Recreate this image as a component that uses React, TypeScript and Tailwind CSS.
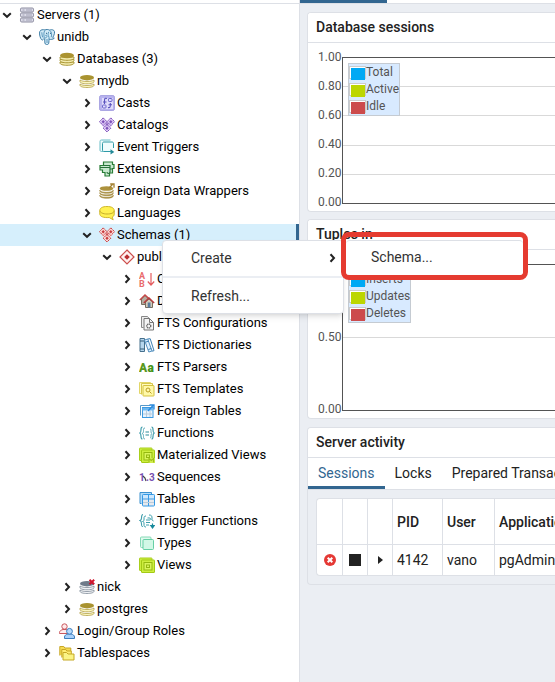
import type { ReactNode } from "react";

function Icon({ children }: { children: ReactNode }) {
  return (
    <svg viewBox="0 0 16 16" className="size-4 shrink-0" fill="none" aria-hidden="true">
      {children}
    </svg>
  );
}

function Disks({ dark, light, children }: { dark: string; light: string; children?: ReactNode }) {
  return (
    <Icon>
      <path d="M1 11v1.3c0 1.3 3 2.2 7 2.2s7-.9 7-2.2V11c-1.500 1-4 1.500-7 1.500S2.500 12 1 11z" fill={light} stroke={dark} strokeWidth=".7" />
      <path d="M1 7v1.600c0 1.300 3 2.200 7 2.200s7-.9 7-2.200V7c-1.500 1-4 1.500-7 1.500S2.500 8 1 7z" fill={light} stroke={dark} strokeWidth=".7" />
      <ellipse cx="8" cy="4.700" rx="7" ry="2.700" fill={dark} />
      {children}
    </Icon>
  );
}

function Diamonds({ color, fill }: { color: string; fill: string }) {
  const spots = [[4.2, 4.7], [11.8, 4.7], [8, 11.2]];
  return (
    <Icon>
      <path d="M4.200 1L8 4.500 11.800 1l3.700 3.700L8 15.200.5 4.700z" fill={fill} />
      {spots.map(([x, y], i) => (
        <g key={i}>
          <path d={`M${x} ${y - 3.8}l3.800 3.800-3.800 3.800-3.800-3.800z`} fill={fill} stroke={color} strokeDasharray="2 .5" />
          <path d={`M${x} ${y - 1.7}l1.700 1.700-1.700 1.700-1.700-1.700z`} fill={color} />
        </g>
      ))}
      <path d="M8 5.500l1.500 1.700L8 9 6.500 7.200z" fill={color} fillOpacity=".7" />
    </Icon>
  );
}

function Views({ children }: { children?: ReactNode }) {
  return (
    <Icon>
      <rect x=".5" y="1" width="12.500" height="12.500" rx=".5" fill="#cdee3e" stroke="#a9cf1c" />
      <rect x="2.500" y="3" width="13" height="12.500" rx=".5" fill="#cdee3e" stroke="#a3c915" />
      <rect x="5" y="5.500" width="8" height="7.500" fill="#d9f55c" stroke="#94b810" />
      <rect x="7.500" y="8" width="3" height="2.500" stroke="#94b810" />
      {children}
    </Icon>
  );
}

const icons = {
  servers: (
    <Icon>
      {[1, 6, 11].map((y) => (
        <g key={y}>
          <rect x="1.500" y={y} width="13" height="4" rx="1.200" fill="#dcdce8" stroke="#8c8ca0" />
          <path d={`M3.500 ${y + 2}h2M7 ${y + 2}h6`} stroke="#a0a0b4" />
        </g>
      ))}
    </Icon>
  ),
  elephant: (
    <Icon>
      <path d="M3 .8C.8 1 .2 3.300.7 6c.4 2.300 1.400 5 2.600 5 .8 0 1.200-1 1.700-1.600l.7.6.2 4c.3 1.700 2.200 2.300 3.400 1.100.8-.8.500-3.200.8-4.900 1.500.5 4 .2 5.200-1-1.200.1-1.700-.5-1.300-1.200 1.400-2.200 2.200-5.400.9-6.500-1.400-1.100-3.200-.9-4.200-.4C9.100.3 7.200.3 6 1 5 .6 4 .6 3 .8z" fill="#d3ebf7" stroke="#3f7ea6" />
      <path d="M5.800 1.500c-1.400 2-.8 4.500-.6 7.500M10.700 1.400c2 1.600 2.300 3.800 1.500 6.800M9.800 2.800c-1.200 1.900-.8 3 .2 5.500v2M6.300 6.500c1-.6 1.700-.3 1.700.7S7 9 5.800 9M2.800 3.300c.2 2 .3 3.400.8 5M8 10v4" stroke="#4c8db5" strokeWidth=".9" />
      <path d="M7 4.300h1M11 4.300h1" stroke="#265d80" />
    </Icon>
  ),
  databases: (
    <Icon>
      {[12, 9.500, 7].map((y) => (
        <path key={y} d={`M1 ${y - 1}v1c0 1.400 3 2.300 7 2.300s7-.9 7-2.300v-1z`} fill="#f3ebae" stroke="#a38e2a" strokeWidth=".9" />
      ))}
      <ellipse cx="8" cy="4.500" rx="7" ry="2.800" fill="#ab9330" />
    </Icon>
  ),
  database: <Disks dark="#a99330" light="#fbf7bf" />,
  databaseOff: (
    <Disks dark="#6f7b8a" light="#f0f2f5">
      <path d="M10.500.8l4.700 4.400M15.200.8l-4.700 4.400" stroke="#d2142b" strokeWidth="2" />
    </Disks>
  ),
  casts: (
    <Icon>
      <rect x=".6" y=".6" width="14.800" height="14.800" rx="1.500" fill="#b9b4ef" stroke="#a5a0e0" />
      <path d="M3 3h11v11H3z" fill="#dfdcfb" />
      <path d="M8 3.500c-2-.6-2.500 0-2.500 2V9M4 7h3.500M9 12.500c2 .6 2.300-.5 2.300-2.500V8M9.500 9.700h3.500" stroke="#5952bd" strokeWidth="1.100" />
      <rect x="9.500" y="3.500" width="3.500" height="3" rx=".7" stroke="#6962ca" />
      <rect x="3.500" y="10" width="3.500" height="3" rx=".7" stroke="#6962ca" />
    </Icon>
  ),
  catalogs: <Diamonds color="#7d50b8" fill="#dfcbf6" />,
  schemas: <Diamonds color="#c83b3e" fill="#fbdcda" />,
  schema: (
    <Icon>
      <path d="M8 1l7 7-7 7-7-7z" fill="#fff0ef" stroke="#cc4e4d" strokeWidth="1.200" />
      <path d="M8 5.200L10.800 8 8 10.800 5.200 8z" fill="#b92e31" />
    </Icon>
  ),
  triggers: (
    <Icon>
      <path d="M11.500 1h-9C1.500 1 1 1.500 1 2.500v8.500c0 1 .5 1.500 1.500 1.500H4" fill="#eefbfc" stroke="#68bdc7" />
      <path d="M14.500 9V4.500c0-1-.5-1.500-1.500-1.500H5c-1 0-1.500.5-1.500 1.500V11c0 1 .5 1.500 1.500 1.500h8.500" fill="#f0fcfd" stroke="#2f9aa7" />
      <path d="M11.500 10.200l3.800 2.700-3.800 2.700z" fill="#238997" />
    </Icon>
  ),
  extensions: (
    <Icon>
      <path d="M4.500 1h9v2.500H15v4h-1.500V12h-3v3H6v-3.500H3.500V9H1V4.500h3.500z" fill="#c8e9cf" stroke="#287d36" strokeWidth="1.200" />
      <path d="M1 6.500h10v4.500c0 2-3 2-3 0M4.500 4.500H11v2M11 8h2.500" stroke="#28723a" strokeWidth="1.200" />
    </Icon>
  ),
  fdw: (
    <Icon>
      {[13, 10.500, 8].map((y) => (
        <path key={y} d={`M.8 ${y - 1}c0 1.400 3 2.300 6.700 2.300s6.700-.9 6.700-2.300v1c0 1.500-3 2.300-6.700 2.300S.8 ${y + 1} .8 ${y}z`} fill="#aa9140" stroke="#987c2c" strokeWidth=".5" />
      ))}
      <ellipse cx="7.500" cy="5.500" rx="6.700" ry="2.300" fill="#ad923d" />
      <path d="M10 5l3.500-3.500M11.200 1H15v3.800" stroke="#a38131" strokeWidth="1.300" />
    </Icon>
  ),
  languages: (
    <Icon>
      <path d="M.8 5.500C.8 3 3.500 1.500 8 1.500S15.200 3 15.200 5.500V9c0 1.700-.7 2.500-2 3l1 2.800-4-2.300C4.500 13 .8 11.500.8 9z" fill="#fff152" stroke="#d0b92e" />
      <path d="M.8 5.500c0 2 3.200 3.500 7.200 3.500s7.200-1 7.200-3.500" stroke="#c6ad2a" />
    </Icon>
  ),
  collations: (
    <Icon>
      <text x="0" y="7.500" fontSize="9" fontWeight="700" fill="#e96b6c">A</text>
      <text x="0" y="15.500" fontSize="9" fontWeight="700" fill="#e96b6c">B</text>
      <path d="M12 2v12M8.800 10.500L12 14l3.200-3.500" stroke="#e45c5e" strokeWidth="1.200" />
    </Icon>
  ),
  domains: (
    <Icon>
      <path d="M2.500 6v5.500h7V6L6 2.500z" fill="#b5ada0" stroke="#776e60" />
      <path d="M.8 7L6 2l5 4.500" stroke="#c64747" strokeWidth="1.300" />
      <path d="M6.500 9v5.500h7V9L10 6z" fill="#d3cbb9" stroke="#776e60" />
      <path d="M4.800 10L10 5l5.200 5" stroke="#b83a3c" strokeWidth="1.400" />
      <path d="M8.700 9.500h2.800v5H8.700z" fill="#577c9e" />
    </Icon>
  ),
  ftsConfig: (
    <Icon>
      <path d="M4.500 12.500h-2v-11h6l2 2.500" fill="#eee" stroke="#888" />
      <path d="M5 3.500h5.500l4 4v7.500H5z" fill="#f4f4f4" stroke="#777" />
      <path d="M10.500 3.500v4h4" stroke="#777" />
      <circle cx="9.800" cy="11" r="2" stroke="#666" strokeWidth="1.300" strokeDasharray="1.200 .5" />
    </Icon>
  ),
  ftsDictionary: (
    <Icon>
      <path d="M1 1.500h4.500v13H1z" fill="#b6d6ed" stroke="#46708d" />
      <path d="M1 4h4.500M1 12h4.500" stroke="#345c78" />
      <path d="M5.500 3l3.200-1L13 14l-3.200 1z" fill="#dcefff" stroke="#5490bf" />
      <path d="M8.700 2l2.500-.3L15 13.700l-2 .5M7 5l3-1M9.300 12.500l3-1" stroke="#3d80b4" />
    </Icon>
  ),
  ftsParser: (
    <Icon>
      <text x="0" y="13" fontSize="12" fontWeight="900" fill="#5a981e">A</text>
      <text x="8.500" y="13" fontSize="12" fontWeight="900" fill="#439316">a</text>
    </Icon>
  ),
  ftsTemplate: (
    <Icon>
      <path d="M3.500 12.500h-3v-11h11v2" fill="#fffbc1" stroke="#e2d668" />
      <path d="M2.500 13.500v-11h11v2" fill="#fffbc1" stroke="#d8c94d" />
      <rect x="4" y="4.500" width="11" height="10.500" rx=".5" fill="#fff9a8" stroke="#d4c13f" />
      <circle cx="9" cy="9" r="2" stroke="#ba9c24" />
      <path d="M10.500 10.500l2 2" stroke="#ba9c24" />
    </Icon>
  ),
  foreignTables: (
    <Icon>
      <path d="M1.500 12.500v-10h9.500" stroke="#5799ca" />
      <rect x="3.500" y="4.500" width="10.500" height="10" fill="#e6f3ff" stroke="#3d9ae1" />
      <path d="M3.500 5H14v2.500H3.500z" fill="#6cb8f2" />
      <path d="M4 11h10M7.500 7.500V14M11 7.500V14" stroke="#b9cbda" />
      <path d="M9 8l5-5.500M10.500 2H15v4.500" stroke="#2989dd" strokeWidth="1.300" />
    </Icon>
  ),
  functions: (
    <Icon>
      <path d="M3.500 2C2 2 2 3 2 4.500S2 7.500.8 8C2 8.500 2 10 2 11.500S2 14 3.500 14M12.500 2C14 2 14 3 14 4.500s0 3 1.200 3.500c-1.200.5-1.200 2-1.200 3.500s0 2.500-1.500 2.500" stroke="#409eac" strokeWidth="1.200" />
      <path d="M6 3c-1.700 0-1.500 1-1.500 2.500S4.500 8 3.200 8.500c1.300.5 1.300 1.500 1.300 3s0 2.500 1.500 2.500M11 4c1 0 1 1 1 2s0 2 1 2.500c-1 .5-1 1.500-1 2.500s0 2-1 2" stroke="#59abb8" />
      <path d="M6.500 7H10M6.500 10H10" stroke="#2c8d9c" strokeWidth="1.200" />
    </Icon>
  ),
  matViews: (
    <Views>
      <path d="M9.500 11H16v5H9.500z" fill="#d3ed4e" />
      <path d="M10 15.500v-4l2.300 2 2.300-2v4" stroke="#9cbf18" strokeWidth="1.200" />
    </Views>
  ),
  sequences: (
    <Icon>
      <text x="0" y="12" fontSize="10" fontWeight="700" fill="#764fb0">1</text>
      <path d="M4 7l2 2 1 3" stroke="#444" strokeWidth="1.200" />
      <text x="7" y="12" fontSize="10" fontWeight="700" fill="#764fb0">.3</text>
    </Icon>
  ),
  tables: (
    <Icon>
      <path d="M2.500 12.500H1v-11h11.500V3" fill="#b7ddfa" stroke="#3b91cf" />
      <rect x="3.500" y="3.500" width="12" height="11.500" rx=".8" fill="#e6e9ee" stroke="#3399e6" />
      <path d="M4 4h11v3.500H4z" fill="#cfe8fd" />
      <path d="M4 8h11M9.500 4v11" stroke="#3a9be6" />
      <path d="M4 11.500h11" stroke="#bbccda" />
    </Icon>
  ),
  triggerFunctions: (
    <Icon>
      <path d="M4 1.500C2.500 1.500 2.500 3 2.500 5S2.300 7 1 7.500c1.500.5 1.500 1.500 1.500 3.500s0 2.500 1.500 2.500" stroke="#409eac" strokeWidth="1.100" />
      <path d="M7 3C5 3 5 4 5 6s0 2-1.500 2.500C5 9 5 9 5 11s0 3 2 3M10 2c2.500 0 3 1 3 3s0 2.500 1.500 3M8.500 5c2.500-.5 3.500.5 3.500 2M7 7h4M7 9.500h4M7 12h3" stroke="#3da0ad" />
      <path d="M13.500 10.500v4M11.500 12.500h4M11.700 12.500l1.800 2.500 1.800-2.500z" stroke="#16899b" strokeWidth="1.200" />
    </Icon>
  ),
  types: (
    <Icon>
      <rect x="1.500" y="2" width="10.500" height="10.500" rx="1" fill="#dff9ed" stroke="#86dab6" />
      <rect x="4" y="4.500" width="10.500" height="10" rx="1" fill="#d2f8e6" stroke="#66cfa5" />
    </Icon>
  ),
  views: <Views />,
  roles: (
    <Icon>
      <circle cx="5.500" cy="3.500" r="2.700" fill="#ffe9e9" stroke="#c8575e" />
      <path d="M.5 10.500V9.500C.5 8 2 7 4 6.500h3c2 .5 3 1.500 3 3v1z" fill="#ffeded" stroke="#c8575e" />
      <path d="M5.500 15.500V14c0-1.700 1.500-2.500 3.500-3h3c2 .5 3.500 1.300 3.500 3v1.500z" fill="#a9d1fa" stroke="#3b7dbd" />
      <circle cx="10.500" cy="8.300" r="2.900" fill="#b7dafc" stroke="#3b7dbd" />
    </Icon>
  ),
  tablespaces: (
    <Icon>
      <path d="M.8 10.500v-9h4l1 1.500h6v3" fill="#f6dc54" stroke="#c8a726" />
      <path d="M2.800 12.500v-8h4l1 1.500h4.500v3" fill="#ffed72" stroke="#c8a726" />
      <path d="M4 15V7.500h3.500L9 9h6v6z" fill="#fbf486" stroke="#c6a927" />
    </Icon>
  ),
};

type Node = { level: 0 | 1 | 2 | 3 | 4 | 5 | 6; icon: keyof typeof icons; label: string; open?: boolean; selected?: boolean };

const indent = ["pl-0", "pl-5", "pl-10", "pl-15", "pl-20", "pl-25", "pl-30"];

const nodes: Node[] = [
  { level: 0, icon: "servers", label: "Servers (1)", open: true },
  { level: 1, icon: "elephant", label: "unidb", open: true },
  { level: 2, icon: "databases", label: "Databases (3)", open: true },
  { level: 3, icon: "database", label: "mydb", open: true },
  { level: 4, icon: "casts", label: "Casts" },
  { level: 4, icon: "catalogs", label: "Catalogs" },
  { level: 4, icon: "triggers", label: "Event Triggers" },
  { level: 4, icon: "extensions", label: "Extensions" },
  { level: 4, icon: "fdw", label: "Foreign Data Wrappers" },
  { level: 4, icon: "languages", label: "Languages" },
  { level: 4, icon: "schemas", label: "Schemas (1)", open: true, selected: true },
  { level: 5, icon: "schema", label: "public", open: true },
  { level: 6, icon: "collations", label: "Collations" },
  { level: 6, icon: "domains", label: "Domains" },
  { level: 6, icon: "ftsConfig", label: "FTS Configurations" },
  { level: 6, icon: "ftsDictionary", label: "FTS Dictionaries" },
  { level: 6, icon: "ftsParser", label: "FTS Parsers" },
  { level: 6, icon: "ftsTemplate", label: "FTS Templates" },
  { level: 6, icon: "foreignTables", label: "Foreign Tables" },
  { level: 6, icon: "functions", label: "Functions" },
  { level: 6, icon: "matViews", label: "Materialized Views" },
  { level: 6, icon: "sequences", label: "Sequences" },
  { level: 6, icon: "tables", label: "Tables" },
  { level: 6, icon: "triggerFunctions", label: "Trigger Functions" },
  { level: 6, icon: "types", label: "Types" },
  { level: 6, icon: "views", label: "Views" },
  { level: 3, icon: "databaseOff", label: "nick" },
  { level: 3, icon: "database", label: "postgres" },
  { level: 2, icon: "roles", label: "Login/Group Roles" },
  { level: 2, icon: "tablespaces", label: "Tablespaces" },
];

function Chevron({ open }: { open?: boolean }) {
  return (
    <svg viewBox="0 0 14 14" className="size-3.5 shrink-0" fill="none" stroke="#222" strokeWidth="2" aria-hidden="true">
      <path d={open ? "M3.200 5.200L7 8.800l3.800-3.600" : "M5.500 3.200L9 7l-3.500 3.800"} />
    </svg>
  );
}

function Tree() {
  return (
    <ul role="tree" className="text-[13px] leading-[22px] text-black">
      {nodes.map((n) => (
        <li key={n.label} role="treeitem" aria-expanded={!!n.open} aria-selected={!!n.selected}>
          <button className={`flex h-[22px] w-full items-center text-left whitespace-nowrap ${n.selected ? "border-r-[3px] border-[#326690] bg-[#d6effc]" : ""} ${indent[n.level]}`}>
            <Chevron open={n.open} />
            <span className="mr-0.5 ml-[5px] flex">{icons[n.icon]}</span>
            {n.label}
          </button>
        </li>
      ))}
    </ul>
  );
}

const swatches = ["bg-[#00a9f4]", "bg-[#bcd602]", "bg-[#cc4b4c]"];

function Chart({ ticks, series }: { ticks: string[]; series: string[] }) {
  return (
    <div className="flex h-[168px] pt-2 pl-2.5 text-xs text-[#545454]">
      <div className="flex h-[157px] w-6 shrink-0 flex-col justify-between leading-3">
        {ticks.map((t) => (
          <span key={t}>{t}</span>
        ))}
      </div>
      <div className="relative mt-1.5 h-[147px] min-w-0 flex-1 border-y border-l border-[#545454]">
        <svg className="size-full" aria-hidden="true">
          {ticks.slice(1, -1).map((t) => (
            <line key={t} x1="0" x2="100%" y1={Math.round((1 - Number(t)) * 146) - 0.5} y2={Math.round((1 - Number(t)) * 146) - 0.5} stroke="#d9d9d9" />
          ))}
        </svg>
        <ul className="absolute top-[5px] left-[5px] border border-[#c5cbd2] bg-[#d8eaff] leading-[17px]">
          {series.map((s, i) => (
            <li key={s} className="flex items-center">
              <span className="flex h-[13px] w-[17px] justify-end border border-[#ccc] bg-white pt-px">
                <span className={`h-3 w-3.5 shrink-0 ${swatches[i]}`} />
              </span>
              {s}
            </li>
          ))}
        </ul>
      </div>
    </div>
  );
}

function Card({ title, className = "", children }: { title: string; className?: string; children: ReactNode }) {
  return (
    <section className={`overflow-hidden rounded-l border border-r-0 border-[#dde0e6] ${className}`}>
      <h2 className="h-[30px] border-b border-[#dde0e6] bg-white pl-2 text-sm leading-[29px] font-medium text-[#222]">{title}</h2>
      {children}
    </section>
  );
}

const cell = "border-r border-[#dde0e6] px-1";
const tab = "border-b-[3px] px-2.5 pt-0.5";

function Activity() {
  return (
    <>
      <div role="tablist" className="flex h-8 border-b border-[#dde0e6] bg-white text-sm whitespace-nowrap text-[#222]">
        <button role="tab" aria-selected="true" className={`${tab} border-[#326690] text-[#326690]`}>Sessions</button>
        <button role="tab" aria-selected="false" className={`${tab} border-transparent`}>Locks</button>
        <button role="tab" aria-selected="false" className={`${tab} border-transparent`}>Prepared Transactions</button>
      </div>
      <div className="p-2 pr-0">
        <div className="overflow-hidden rounded-l border border-r-0 border-[#dde0e6] bg-white">
          <table className="w-[480px] table-fixed border-separate border-spacing-0 text-left text-sm text-[#222]">
            <colgroup>
              <col className="w-[26px]" />
              <col className="w-[25px]" />
              <col className="w-[25px]" />
              <col className="w-[50px]" />
              <col className="w-[52px]" />
              <col />
            </colgroup>
            <thead>
              <tr className="h-[46px]">
                <th className={`${cell} border-b`} />
                <th className={`${cell} border-b`} />
                <th className={`${cell} border-b`} />
                <th className={`${cell} border-b font-medium`}>PID</th>
                <th className={`${cell} border-b font-medium`}>User</th>
                <th className={`${cell} border-b font-medium`}>Application</th>
              </tr>
            </thead>
            <tbody>
              <tr className="h-[30px]">
                <td className={cell}>
                  <button aria-label="Terminate session" className="mx-auto block">
                    <svg viewBox="0 0 12 12" className="size-3">
                      <circle cx="6" cy="6" r="6" fill="#e53935" />
                      <path d="M3.700 3.700l4.600 4.600M8.300 3.700L3.700 8.300" stroke="#fff" strokeWidth="2" />
                    </svg>
                  </button>
                </td>
                <td className={cell}>
                  <button aria-label="Cancel query" className="mx-auto block size-3 bg-[#222]" />
                </td>
                <td className={cell}>
                  <button aria-label="View details" className="mx-auto block">
                    <svg viewBox="0 0 5 8" className="h-2 w-[5px]">
                      <path d="M0 0l5 4-5 4z" fill="#222" />
                    </svg>
                  </button>
                </td>
                <td className={cell}>4142</td>
                <td className={cell}>vano</td>
                <td className={cell}>pgAdmin 4</td>
              </tr>
            </tbody>
          </table>
        </div>
      </div>
    </>
  );
}

function ContextMenu() {
  return (
    <>
      <div role="menu" className="absolute top-60 left-[162px] w-[182px] rounded border border-[#dde0e6] bg-white text-sm text-[#333] shadow-md">
        <button role="menuitem" aria-haspopup="menu" className="flex h-[37px] w-full items-center justify-between border-b-2 border-[#ebeef3] pr-1 pb-0.5 pl-7">
          Create
          <Chevron />
        </button>
        <button role="menuitem" className="flex h-[35px] w-full items-center pl-7">Refresh...</button>
      </div>
      <div className="absolute top-[232px] left-[341px] w-[187px] rounded-lg border-[5px] border-[#e53b30] pt-[3px]">
        <div role="menu" className="rounded border-t border-[#dde0e6] bg-white text-sm text-[#333]">
          <button role="menuitem" className="flex h-[34px] w-full items-center pb-0.5 pl-[25px]">Schema...</button>
        </div>
      </div>
    </>
  );
}

export default function App() {
  return (
    <main className="relative flex min-h-screen overflow-hidden bg-white font-[Roboto,sans-serif]">
      <aside className="w-[300px] shrink-0 border-r border-[#dde0e6] pt-[3px]">
        <div className="border-t border-[#dde0e6]">
          <Tree />
        </div>
      </aside>
      <div className="min-w-0 flex-1 bg-[#ebeef3]">
        <div className="h-1 border-b border-[#dde0e6] bg-white">
          <div className="h-[3px] w-[87px] bg-[#326690]" />
        </div>
        <div className="pt-2 pl-[7px]">
          <Card title="Database sessions" className="mb-[7px] bg-white">
            <Chart ticks={["1.00", "0.80", "0.60", "0.40", "0.20", "0.00"]} series={["Total", "Active", "Idle"]} />
          </Card>
          <Card title="Tuples in" className="mb-2 bg-white">
            <Chart ticks={["1.00", "0.50", "0.00"]} series={["Inserts", "Updates", "Deletes"]} />
          </Card>
          <Card title="Server activity">
            <Activity />
          </Card>
        </div>
      </div>
      <ContextMenu />
    </main>
  );
}
